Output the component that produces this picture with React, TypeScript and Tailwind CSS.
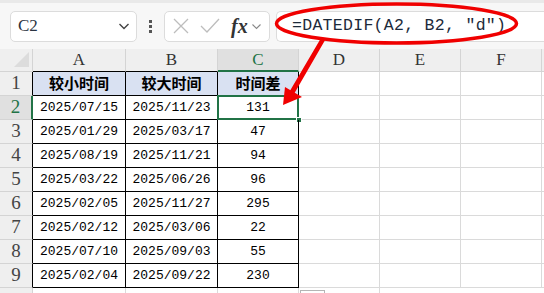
import React from 'react';

const rows = [
  ['2025/07/15', '2025/11/23', '131'],
  ['2025/01/29', '2025/03/17', '47'],
  ['2025/08/19', '2025/11/21', '94'],
  ['2025/03/22', '2025/06/26', '96'],
  ['2025/02/05', '2025/11/27', '295'],
  ['2025/02/12', '2025/03/06', '22'],
  ['2025/07/10', '2025/09/03', '55'],
  ['2025/02/04', '2025/09/22', '230'],
];

const serif = "font-[family-name:'Liberation_Serif',serif]";
const mono = "font-[family-name:'Liberation_Mono',monospace]";
const cjk = "font-[family-name:'Noto_Sans_CJK_SC',sans-serif]";

const EmptyCells = () => (
  <>
    <div className="w-[81px] h-full border-r border-b border-[#dadada]" />
    <div className="w-[81px] h-full border-r border-b border-[#dadada]" />
    <div className="w-[81px] h-full border-r border-b border-[#dadada]" />
    <div className="flex-1 h-full border-b border-[#dadada]" />
  </>
);

export default function App() {
  return (
    <div className="relative w-[544px] h-[293px] overflow-hidden bg-white">
      {/* toolbar */}
      <div className="h-[49px] bg-[#f7f7f7] border-t-[3px] border-[#e9e9e9] flex items-center pl-[10px]">
        <div className="w-[127px] h-[31px] bg-white border border-[#dcdcdc] rounded-[5px] flex items-center justify-between pl-[7px] pr-[5px]">
          <span className={`${serif} text-[17px] text-[#2b3442]`}>C2</span>
          <svg width="14" height="14" viewBox="0 0 14 14" fill="none" stroke="#444" strokeWidth="1.4">
            <path d="M2.5 5 L7 9.5 L11.5 5" />
          </svg>
        </div>
        <div className="w-[27px] flex flex-col items-center gap-[2px]">
          <div className="w-[3px] h-[3px] bg-[#555]" />
          <div className="w-[3px] h-[3px] bg-[#555]" />
          <div className="w-[3px] h-[3px] bg-[#555]" />
        </div>
        <div className="w-[106px] h-[31px] bg-white border border-[#dcdcdc] rounded-[5px] flex items-center pl-[6px]">
          <svg width="20" height="20" viewBox="0 0 20 20" fill="none" stroke="#bdbdbd" strokeWidth="1.3">
            <path d="M3 3 L17 17 M17 3 L3 17" />
          </svg>
          <svg className="ml-[8px]" width="22" height="20" viewBox="0 0 22 20" fill="none" stroke="#bdbdbd" strokeWidth="1.3">
            <path d="M2 10 L8 16 L20 3" />
          </svg>
          <span className={`${serif} italic font-bold ml-[10px] text-[20px] text-[#333] leading-none`}>fx</span>
          <svg className="ml-[3px]" width="11" height="11" viewBox="0 0 11 11" fill="none" stroke="#888" strokeWidth="1.1">
            <path d="M1.5 3.5 L5.5 7.5 L9.5 3.5" />
          </svg>
        </div>
        <div className="ml-[6px] flex-1 h-[31px] bg-white border-y border-l border-[#dcdcdc] rounded-l-[5px] flex items-center pl-[15px]">
          <span className={`${mono} text-[16.5px] text-[#1c2a3a] tracking-[0.3px]`}>=DATEDIF(A2, B2, "d")</span>
        </div>
      </div>

      {/* column headers */}
      <div className={`flex h-[23px] bg-[#efefef] ${serif} text-[17px] text-[#333]`}>
        <div className="relative w-[33px] h-full border-r border-b border-[#d4d4d4]">
          <div className="absolute right-[3px] bottom-[4px] w-0 h-0 border-l-[15px] border-l-transparent border-b-[15px] border-b-[#dcdcdc]" />
        </div>
        <div className="w-[93px] h-full border-r border-b border-[#d4d4d4] border-b-black flex items-center justify-center">A</div>
        <div className="w-[92px] h-full border-r border-b border-[#d4d4d4] border-b-black flex items-center justify-center">B</div>
        <div className="w-[81px] h-full border-r border-[#d4d4d4] border-b-2 border-b-[#217346] bg-[#e0e0e0] text-[#217346] flex items-center justify-center">C</div>
        <div className="w-[81px] h-full border-r border-b border-[#d4d4d4] flex items-center justify-center">D</div>
        <div className="w-[81px] h-full border-r border-b border-[#d4d4d4] flex items-center justify-center">E</div>
        <div className="w-[81px] h-full border-r border-b border-[#d4d4d4] flex items-center justify-center">F</div>
        <div className="flex-1 h-full border-b border-[#d4d4d4]" />
      </div>

      {/* row 1 */}
      <div className="flex h-[24px]">
        <div className={`w-[33px] h-full bg-[#efefef] border-r border-b border-r-black border-b-[#d4d4d4] ${serif} text-[19px] text-[#444] flex items-center justify-center`}>1</div>
        {['较小时间', '较大时间', '时间差'].map((t, i) => (
          <div
            key={t}
            className={`${i === 0 ? 'w-[93px]' : i === 1 ? 'w-[92px]' : 'w-[81px]'} h-full bg-[#d9e1f2] border-r border-b border-black ${cjk} font-bold text-[15px] text-black flex items-center justify-center`}
          >
            {t}
          </div>
        ))}
        <EmptyCells />
      </div>

      {rows.map((r, idx) => {
        const n = idx + 2;
        const sel = n === 2;
        return (
          <div key={n} className="flex h-[24px]">
            <div
              className={`w-[33px] h-full border-b border-b-[#d4d4d4] ${serif} text-[19px] flex items-center justify-center ${
                sel ? 'bg-[#e0e0e0] border-r-2 border-r-[#217346] text-[#217346]' : 'bg-[#efefef] border-r border-r-black text-[#444]'
              }`}
            >
              {n}
            </div>
            <div className={`w-[93px] h-full border-r border-b border-black ${mono} text-[13px] text-black flex items-center justify-center`}>{r[0]}</div>
            <div className={`w-[92px] h-full border-r border-b border-black ${mono} text-[13px] text-black flex items-center justify-center`}>{r[1]}</div>
            <div className={`relative w-[81px] h-full border-r border-b border-black ${mono} text-[13px] text-black flex items-center justify-center`}>
              {r[2]}
              {sel && (
                <>
                  <div className="absolute -left-px -top-px w-[82px] h-[25px] border-2 border-[#217346]" />
                  <div className="absolute -right-[4px] -bottom-[4px] w-[6px] h-[6px] bg-[#217346] border border-white" />
                </>
              )}
            </div>
            <EmptyCells />
          </div>
        );
      })}

      {/* row 10 stub */}
      <div className="flex h-[5px]">
        <div className="w-[33px] h-full bg-[#efefef] border-r border-[#d4d4d4]" />
        <div className="w-[93px] h-full border-r border-[#dadada]" />
        <div className="w-[92px] h-full border-r border-[#dadada]" />
        <div className="w-[81px] h-full border-r border-[#dadada]" />
        <div className="w-[81px] h-full border-r border-[#dadada]" />
      </div>
      <div className="absolute left-[300px] top-[290px] w-[25px] h-[4px] border border-[#b5b5b5] bg-white" />

      {/* annotation */}
      <svg className="absolute left-0 top-0 pointer-events-none" width="544" height="293" viewBox="0 0 544 293">
        <ellipse cx="396.5" cy="23.5" rx="120" ry="19.5" fill="none" stroke="#f00000" strokeWidth="3.5" />
        <path d="M324 40 L321 40 L291 91 L294 92 Z" fill="#f00000" stroke="#f00000" strokeWidth="2" strokeLinejoin="round" />
        <path d="M283 105 L285 87 L302 97 Z" fill="#f00000" />
      </svg>
    </div>
  );
}
